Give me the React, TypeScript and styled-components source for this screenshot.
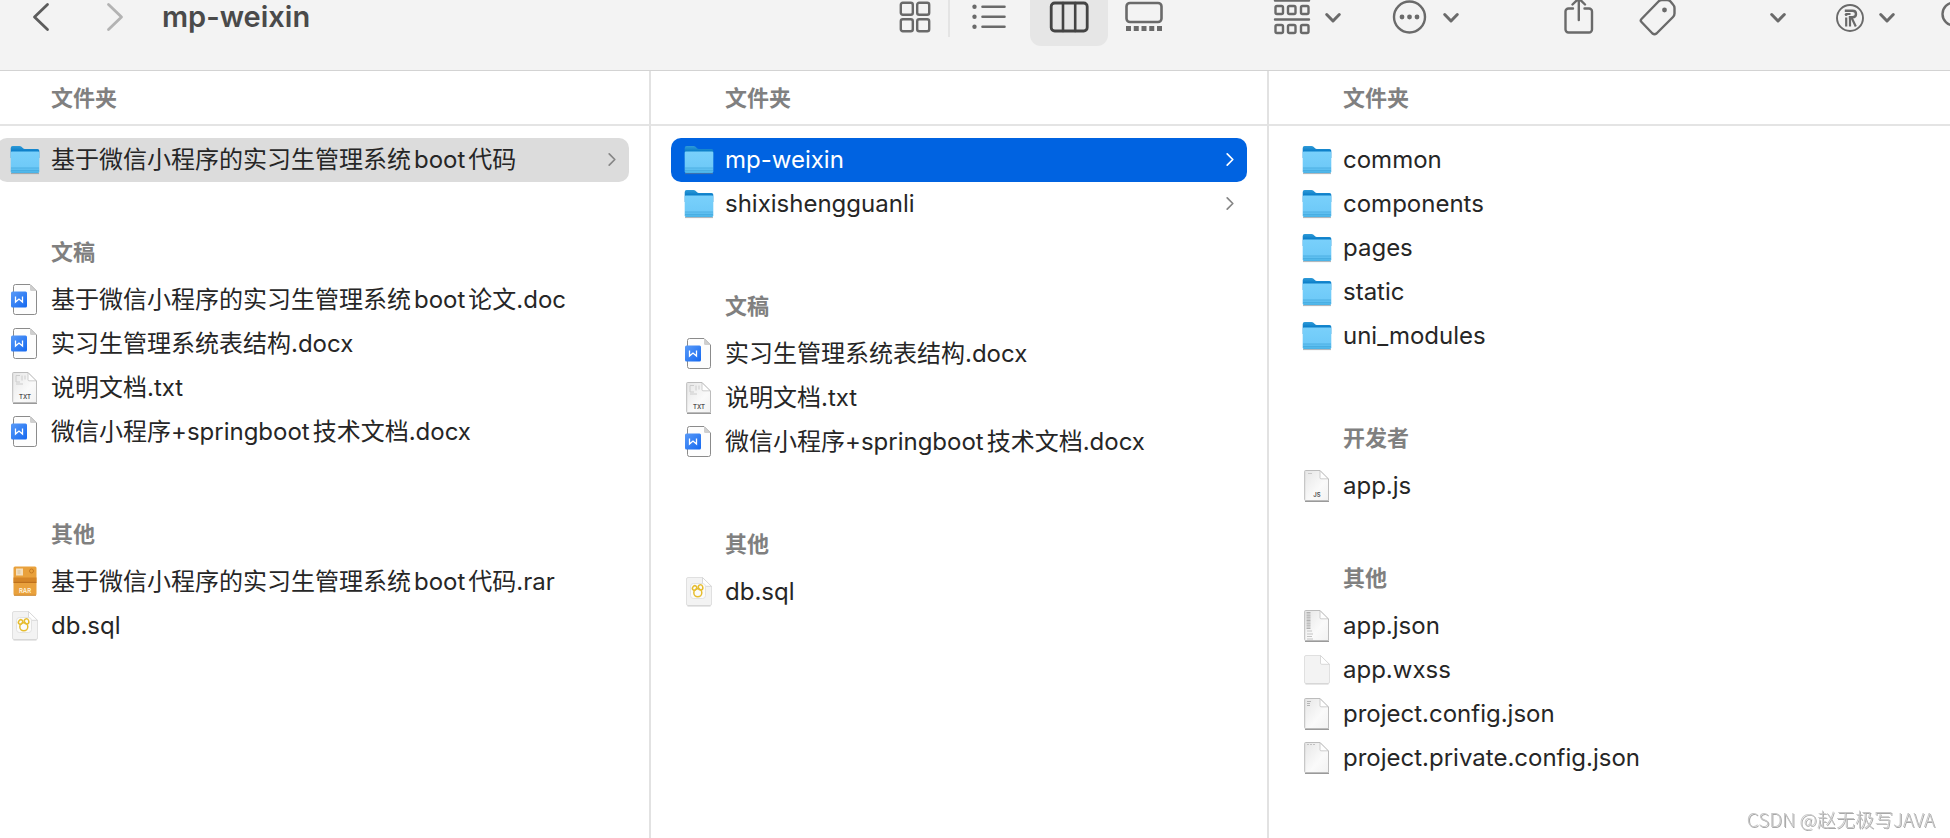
import React from "react";
import styled, { createGlobalStyle } from "styled-components";

const GlobalStyle = createGlobalStyle`
  *, *::before, *::after { box-sizing: border-box; }
  body {
    margin: 0;
    background: #ffffff;
    color: #262626;
    font-family: Inter, "Noto Sans CJK SC", sans-serif;
    font-size: 24px;
    overflow: hidden;
  }
  button {
    margin: 0;
    padding: 0;
    border: 0;
    background: none;
    color: inherit;
    font: inherit;
    text-align: left;
  }
  svg { display: block; flex: none; overflow: visible; }
`;

const Window = styled.div`
  display: flex;
  flex-direction: column;
  min-height: 100vh;
  overflow: hidden;
`;

/* ---------- toolbar ---------- */

const Toolbar = styled.header`
  display: flex;
  align-items: flex-start;
  height: 71px;
  background: #f3f3f3;
  border-bottom: 1px solid #d3d3d3;
  color: #6a6a6a;
`;

const Strip = styled.div`
  display: flex;
  flex: none;
  align-items: center;
  height: 58px;
  margin-top: -12px;
`;

const Navigation = styled(Strip)`
  flex: 1;
  padding-left: 4px;
`;

const NavButton = styled.button<{ $dim?: boolean }>`
  display: flex;
  justify-content: center;
  width: 74px;
  color: ${(p) => (p.$dim ? "#b3b3b3" : "#5c5c5c")};
`;

const Title = styled.h1`
  margin: 0 0 0 10px;
  color: #4a4a4a;
  font-size: 29px;
  font-weight: 600;
  line-height: 34px;
`;

const Segment = styled.button<{ $width: number; $active?: boolean }>`
  display: flex;
  align-items: center;
  justify-content: center;
  width: ${(p) => p.$width}px;
  height: 58px;
  border-radius: 11px;
  background: ${(p) => (p.$active ? "#e6e6e6" : "transparent")};
  color: ${(p) => (p.$active ? "#444444" : "inherit")};
`;

const SegmentDivider = styled.span`
  width: 2px;
  height: 40px;
  background: #e4e4e4;
`;

const Tool = styled.button<{ $gap: number }>`
  display: flex;
  align-items: center;
  gap: 15px;
  margin-left: ${(p) => p.$gap}px;
`;

const SearchTool = styled(Tool)`
  margin-right: -23px;
`;

/* ---------- column browser ---------- */

const Browser = styled.main`
  display: grid;
  grid-template-columns: 674fr 618fr 681fr;
  flex: 1;
  margin-left: -23px;
`;

const Column = styled.section`
  min-width: 0;
  border-right: 2px solid #e2e2e2;
  &:last-child { border-right: 0; }
`;

const ColumnHeading = styled.h2`
  margin: 0 0 12px;
  padding: 14px 20px 13px 74px;
  border-bottom: 2px solid #e4e4e4;
  color: #808080;
  font-size: 22px;
  font-weight: 600;
  line-height: 26px;
`;

const GroupHeading = styled.h3<{ $near: boolean }>`
  margin: ${(p) => (p.$near ? 57 : 67)}px 20px 13px 74px;
  color: #808080;
  font-size: 22px;
  font-weight: 600;
  line-height: 26px;
`;

const List = styled.ul`
  margin: 0;
  padding: 0 20px;
  list-style: none;
`;

type Tone = "active" | "path" | undefined;

const rowFill = { active: "#0063e1", path: "#dcdcdc" };

const Row = styled.button<{ $tone: Tone }>`
  display: flex;
  align-items: center;
  gap: 11px;
  width: 100%;
  height: 44px;
  padding: 0 13px;
  border-radius: 10px;
  background: ${(p) => (p.$tone ? rowFill[p.$tone] : "transparent")};
  color: ${(p) => (p.$tone === "active" ? "#ffffff" : "inherit")};
`;

const Name = styled.span`
  flex: 1;
  line-height: 30px;
  white-space: nowrap;
  text-autospace: normal;
`;

const Disclosure = styled.svg<{ $tone: Tone }>`
  color: ${(p) => (p.$tone === "active" ? "#ffffff" : "#868686")};
`;

const Watermark = styled.div`
  position: fixed;
  right: 15px;
  bottom: 6px;
  color: #c8c8c8;
  font-family: "Noto Sans CJK SC", sans-serif;
  font-size: 19px;
  font-weight: 300;
  line-height: 26px;
  text-shadow: 1px 1px 0 #a8a8a8;
`;

/* ---------- file icons, drawn on a 30 x 32 box ---------- */

const FolderIcon = () => (
  <svg width="30" height="32" viewBox="0 0 30 32" aria-hidden="true">
    <path d="M1 29.6h28" stroke="#6f7d86" strokeOpacity=".6" strokeWidth="1" />
    <path d="M.7 4Q.7 2 2.7 2H9.500q1.200 0 2 .8l1.300 1.200q.9.900 2 .9H27.500q1.800 0 1.800 1.800V14H.7z" fill="url(#folderBack)" />
    <path d="M.7 8.800Q.7 7.600 2 7.600H28q1.300 0 1.300 1.200V27.400q0 1.600-1.600 1.600H2.300Q.7 29 .7 27.400z" fill="url(#folderFront)" />
    <path d="M1 24h28M1 26.500h28" stroke="#3fa5db" strokeOpacity=".6" strokeWidth="1" />
  </svg>
);

const WordIcon = () => (
  <svg width="30" height="32" viewBox="0 0 30 32" aria-hidden="true">
    <path d="M5.500.5H20L26.500 7V28.500a2 2 0 0 1-2 2H5.500a2 2 0 0 1-2-2V2.500a2 2 0 0 1 2-2z" fill="#fdfdfd" stroke="#8b8b8b" />
    <path d="M20 1V5.500Q20 7 21.500 7H26z" fill="#cfcfcf" />
    <rect x="1" y="7.500" width="16" height="16" rx="1.500" fill="url(#wordBlue)" />
    <path d="M5.500 12.500V18L9 15L12.500 18V12.500" fill="none" stroke="#ffffff" strokeWidth="1.300" />
  </svg>
);

const Page = ({ children }: { children?: React.ReactNode }) => (
  <svg width="30" height="32" viewBox="0 0 30 32" aria-hidden="true">
    <path d="M3 31.200h24" stroke="#8f8f8f" strokeWidth="1.400" />
    <path d="M3.500.5H18L26.500 9V30.500H3.500a.8.800 0 0 1-.8-.8V1.300a.8.800 0 0 1 .8-.8z" fill="url(#paper)" stroke="#bcbcbc" />
    <path d="M18 .8V7.800a1 1 0 0 0 1 1H26.200z" fill="#ffffff" stroke="#c2c2c2" strokeWidth=".8" />
    {children}
  </svg>
);

const IconLabel = styled.text`
  font-family: Inter, sans-serif;
  font-size: 6px;
  font-weight: 600;
  text-anchor: middle;
`;

const TextIcon = () => (
  <Page>
    <path d="M6 3.500h4M6 3.500V10h4M12 3.500v5M15 3.500v4M6 12h7" fill="none" stroke="#cccccc" strokeWidth="1" />
    <IconLabel x="15" y="27" fill="#505050">TXT</IconLabel>
  </Page>
);

const ScriptIcon = () => (
  <Page>
    <path d="M6 3.500h4" stroke="#c8c8c8" />
    <IconLabel x="15" y="27" fill="#505050">JS</IconLabel>
  </Page>
);

const JsonIcon = () => (
  <Page>
    <path d="M6.500 2V19" stroke="#b0b0b0" strokeWidth="4" strokeDasharray="1 .6" />
    <path d="M5 21h5M5 24h6M5 26.500h5M5 29h6" stroke="#c4c4c4" />
  </Page>
);

const ConfigIcon = () => (
  <Page>
    <path d="M5 3.500h4M5 5.500h3M5 7.500h3" stroke="#b4b4b4" />
  </Page>
);

const PrivateConfigIcon = () => (
  <Page>
    <path d="M5 2.500h9" stroke="#c0c0c0" strokeDasharray="2 1" />
  </Page>
);

const PalePage = ({ children }: { children?: React.ReactNode }) => (
  <svg width="30" height="32" viewBox="0 0 30 32" aria-hidden="true">
    <path d="M4 1.500H18.500L27.500 10.500V28a1.500 1.500 0 0 1-1.500 1.500H4a1.500 1.500 0 0 1-1.500-1.500V3A1.500 1.500 0 0 1 4 1.500z" fill="#f3f3f3" stroke="#e0e0e0" />
    <path d="M3.500 30h23" stroke="#cfcfcf" />
    <path d="M18.500 1.500V9a1.300 1.300 0 0 0 1.300 1.300H27.500z" fill="#ffffff" stroke="#d0d0d0" strokeWidth=".8" />
    {children}
  </svg>
);

const SqlIcon = () => (
  <PalePage>
    <rect x="6.500" y="7.500" width="15" height="15" rx="3" fill="#fbfbfb" stroke="#dcdcdc" strokeWidth=".8" />
    <g fill="none" stroke="#e6bd30" strokeWidth="1.500">
      <circle cx="13.800" cy="16.800" r="4" />
      <ellipse cx="10.600" cy="12" rx="2" ry="2.400" transform="rotate(35 10.600 12)" />
      <ellipse cx="16.600" cy="11.400" rx="2.200" ry="2.600" transform="rotate(-15 16.600 11.400)" />
    </g>
  </PalePage>
);

const RarIcon = () => (
  <svg width="30" height="32" viewBox="0 0 30 32" aria-hidden="true">
    <rect x="3.500" y=".5" width="23" height="29" rx="1.500" fill="#e9a13c" />
    <path d="M3.500 11.500h23v4h-23z" fill="#d58526" />
    <path d="M3.500 15.500h23v1.500h-23z" fill="#bf701b" />
    <path d="M6 2.500h7v7H6z" fill="#f4dfbd" />
    <path d="M7.500 4h3v4h-3z" fill="#e2cfae" />
    <circle cx="21.500" cy="5" r="2" fill="none" stroke="#c67a20" />
    <path d="M4 29.300h22" stroke="#c27b25" strokeWidth=".8" />
    <IconLabel x="15" y="27" fill="#fff4df">RAR</IconLabel>
  </svg>
);

const Gradients = () => (
  <svg width="0" height="0" aria-hidden="true">
    <defs>
      <linearGradient id="folderBack" x1="0" y1="0" x2="0" y2="1">
        <stop offset="0" stopColor="#2f9bd8" />
        <stop offset=".4" stopColor="#0d7fc9" />
      </linearGradient>
      <linearGradient id="folderFront" x1="0" y1="0" x2="0" y2="1">
        <stop offset="0" stopColor="#79d0fb" />
        <stop offset=".7" stopColor="#6fcaf8" />
        <stop offset="1" stopColor="#49b2e6" />
      </linearGradient>
      <linearGradient id="wordBlue" x1="0" y1="0" x2="1" y2="1">
        <stop offset="0" stopColor="#5a9bf8" />
        <stop offset="1" stopColor="#1468f0" />
      </linearGradient>
      <linearGradient id="paper" x1="0" y1="0" x2="1" y2="1">
        <stop offset="0" stopColor="#e6e6e6" />
        <stop offset=".6" stopColor="#fafafa" />
        <stop offset="1" stopColor="#f2f2f2" />
      </linearGradient>
    </defs>
  </svg>
);

/* ---------- toolbar icons ---------- */

const line = {
  fill: "none",
  stroke: "currentColor",
  strokeWidth: 2.4,
  strokeLinecap: "round",
  strokeLinejoin: "round",
} as const;

const ArrowIcon = ({ forward }: { forward?: boolean }) => (
  <svg width="16" height="30" viewBox="0 0 16 30" aria-hidden="true">
    <path d={forward ? "M1.500 2.500L14.500 15L1.500 27.500" : "M14.500 2.500L1.500 15L14.500 27.500"} {...line} strokeWidth={2.8} />
  </svg>
);

const CaretIcon = () => (
  <svg width="16" height="12" viewBox="0 0 16 12" aria-hidden="true">
    <path d="M1.700 3.500L8 10L14.300 3.500" {...line} strokeWidth={3} />
  </svg>
);

const GridIcon = () => (
  <svg width="32" height="32" viewBox="0 0 32 32" aria-hidden="true">
    <g {...line}>
      <rect x="1.800" y="1.800" width="12" height="12" rx="2" />
      <rect x="18.200" y="1.800" width="12" height="12" rx="2" />
      <rect x="1.800" y="18.200" width="12" height="12" rx="2" />
      <rect x="18.200" y="18.200" width="12" height="12" rx="2" />
    </g>
  </svg>
);

const ListIcon = () => (
  <svg width="36" height="30" viewBox="0 0 36 30" aria-hidden="true">
    <path d="M10.500 4.800H32.500M10.500 14.800H32.500M10.500 24.800H32.500" {...line} strokeWidth={2.6} />
    <g fill="currentColor">
      <circle cx="2.500" cy="4.800" r="2.200" />
      <circle cx="2.500" cy="14.800" r="2.200" />
      <circle cx="2.500" cy="24.800" r="2.200" />
    </g>
  </svg>
);

const ColumnsIcon = () => (
  <svg width="40" height="32" viewBox="0 0 40 32" aria-hidden="true">
    <rect x="2.200" y="2" width="36" height="28" rx="3.500" {...line} strokeWidth={2.8} />
    <path d="M14 2V30M26.200 2V30" {...line} strokeWidth={2.6} />
  </svg>
);

const GalleryIcon = () => (
  <svg width="38" height="32" viewBox="0 0 38 32" aria-hidden="true">
    <rect x="1.500" y="2" width="35" height="19" rx="3.500" {...line} strokeWidth={2.6} />
    <path d="M1 27.500H37" fill="none" stroke="currentColor" strokeWidth="5" strokeDasharray="5 2.750" />
  </svg>
);

const GroupIcon = () => (
  <svg width="36" height="36" viewBox="0 0 36 36" aria-hidden="true">
    <path d="M1 1.500H35M1 20.500H35" {...line} />
    <g {...line}>
      {[7, 26].map((y) =>
        [1.5, 14, 27].map((x) => <rect key={`${x}-${y}`} x={x} y={y} width="7.500" height="8" rx="1.500" />)
      )}
    </g>
  </svg>
);

const MoreIcon = () => (
  <svg width="36" height="34" viewBox="0 0 36 34" aria-hidden="true">
    <circle cx="17.500" cy="17" r="15.500" {...line} />
    <g fill="currentColor">
      <circle cx="10" cy="17" r="2.400" />
      <circle cx="17.500" cy="17" r="2.400" />
      <circle cx="25" cy="17" r="2.400" />
    </g>
  </svg>
);

const ShareIcon = () => (
  <svg width="30" height="38" viewBox="0 0 30 38" aria-hidden="true">
    <path d="M9 10.500H4.500a3 3 0 0 0-3 3V31.500a3 3 0 0 0 3 3H25a3 3 0 0 0 3-3V13.500a3 3 0 0 0-3-3H20.500" {...line} />
    <path d="M14.800 22V1.500M8.500 6.500L14.800.5L21 6.500" {...line} />
  </svg>
);

const TagIcon = () => (
  <svg width="38" height="38" viewBox="0 0 38 38" aria-hidden="true">
    <path d="M19.500 3.500Q21 2 23 2H28Q30 2 31.500 3.500L34 6.500Q35.500 8 35.500 10V15.500Q35.500 17.500 34 19L17.500 35.500Q15.500 37 13.500 35.500L2.500 24Q1 22.500 2.500 21z" {...line} />
    <circle cx="25.500" cy="12" r="2.400" fill="currentColor" />
  </svg>
);

const RegisteredIcon = () => (
  <svg width="28" height="30" viewBox="0 0 28 30" aria-hidden="true">
    <circle cx="14" cy="16" r="13" {...line} strokeWidth={1.9} />
    <path d="M8.800 8.800H16.500Q20 8.800 20 12T16.500 15.300H12.800" fill="none" stroke="currentColor" strokeWidth="2.400" />
    <path d="M14.500 12H10V12M15.500 15.500L19.800 24.500M10.200 15.500V24.500M14 15.500V24.500" fill="none" stroke="currentColor" strokeWidth="2.200" />
    <circle cx="10.200" cy="12.600" r="1.500" fill="currentColor" />
  </svg>
);

const SearchIcon = () => (
  <svg width="32" height="34" viewBox="0 0 32 34" aria-hidden="true">
    <circle cx="13" cy="14" r="11.500" {...line} />
    <path d="M21.500 22.500L30 31" {...line} />
  </svg>
);

/* ---------- data ---------- */

const icons = {
  folder: FolderIcon,
  word: WordIcon,
  text: TextIcon,
  script: ScriptIcon,
  json: JsonIcon,
  config: ConfigIcon,
  privateConfig: PrivateConfigIcon,
  blank: PalePage,
  sql: SqlIcon,
  rar: RarIcon,
};

type Item = { name: string; icon: keyof typeof icons; tone?: Tone; opens?: boolean };
type Group = { title: string; items: Item[] };

const columns: Group[][] = [
  [
    { title: "文件夹", items: [{ name: "基于微信小程序的实习生管理系统boot代码", icon: "folder", tone: "path", opens: true }] },
    {
      title: "文稿",
      items: [
        { name: "基于微信小程序的实习生管理系统boot论文.doc", icon: "word" },
        { name: "实习生管理系统表结构.docx", icon: "word" },
        { name: "说明文档.txt", icon: "text" },
        { name: "微信小程序+springboot技术文档.docx", icon: "word" },
      ],
    },
    {
      title: "其他",
      items: [
        { name: "基于微信小程序的实习生管理系统boot代码.rar", icon: "rar" },
        { name: "db.sql", icon: "sql" },
      ],
    },
  ],
  [
    {
      title: "文件夹",
      items: [
        { name: "mp-weixin", icon: "folder", tone: "active", opens: true },
        { name: "shixishengguanli", icon: "folder", opens: true },
      ],
    },
    {
      title: "文稿",
      items: [
        { name: "实习生管理系统表结构.docx", icon: "word" },
        { name: "说明文档.txt", icon: "text" },
        { name: "微信小程序+springboot技术文档.docx", icon: "word" },
      ],
    },
    { title: "其他", items: [{ name: "db.sql", icon: "sql" }] },
  ],
  [
    {
      title: "文件夹",
      items: ["common", "components", "pages", "static", "uni_modules"].map((name) => ({ name, icon: "folder" as const })),
    },
    { title: "开发者", items: [{ name: "app.js", icon: "script" }] },
    {
      title: "其他",
      items: [
        { name: "app.json", icon: "json" },
        { name: "app.wxss", icon: "blank" },
        { name: "project.config.json", icon: "config" },
        { name: "project.private.config.json", icon: "privateConfig" },
      ],
    },
  ],
];

const FileRow = ({ item }: { item: Item }) => {
  const Icon = icons[item.icon];
  return (
    <li>
      <Row type="button" $tone={item.tone}>
        <Icon />
        <Name>{item.name}</Name>
        {item.opens && (
          <Disclosure $tone={item.tone} width="8" height="14" viewBox="0 0 8 14" aria-hidden="true">
            <path d="M1.200 .8L6.800 6.500L1.200 12.200" {...line} strokeWidth={1.7} />
          </Disclosure>
        )}
      </Row>
    </li>
  );
};

export default function App() {
  return (
    <>
      <GlobalStyle />
      <Window>
        <Toolbar>
          <Navigation>
            <NavButton type="button" aria-label="后退"><ArrowIcon /></NavButton>
            <NavButton type="button" aria-label="前进" $dim><ArrowIcon forward /></NavButton>
            <Title>mp-weixin</Title>
          </Navigation>
          <Strip>
            <Segment type="button" aria-label="图标" $width={66}><GridIcon /></Segment>
            <SegmentDivider />
            <Segment type="button" aria-label="列表" $width={80}><ListIcon /></Segment>
            <Segment type="button" aria-label="分栏" aria-pressed="true" $width={78} $active><ColumnsIcon /></Segment>
            <Segment type="button" aria-label="画廊" $width={72}><GalleryIcon /></Segment>
            <Tool type="button" aria-label="分组" $gap={94}><GroupIcon /><CaretIcon /></Tool>
            <Tool type="button" aria-label="操作" $gap={51}><MoreIcon /><CaretIcon /></Tool>
            <Tool type="button" aria-label="共享" $gap={105}><ShareIcon /></Tool>
            <Tool type="button" aria-label="标签" $gap={45}><TagIcon /></Tool>
            <Tool type="button" aria-label="更多" $gap={93}><CaretIcon /></Tool>
            <Tool type="button" aria-label="扩展" $gap={50}><RegisteredIcon /><CaretIcon /></Tool>
            <SearchTool type="button" aria-label="搜索" $gap={46}><SearchIcon /></SearchTool>
          </Strip>
        </Toolbar>
        <Browser>
          {columns.map((groups, c) => (
            <Column key={c}>
              {groups.map((group, g) => (
                <React.Fragment key={group.title}>
                  {g === 0 ? (
                    <ColumnHeading>{group.title}</ColumnHeading>
                  ) : (
                    <GroupHeading $near={groups[g - 1].items.length === 1}>{group.title}</GroupHeading>
                  )}
                  <List>
                    {group.items.map((item) => <FileRow key={item.name} item={item} />)}
                  </List>
                </React.Fragment>
              ))}
            </Column>
          ))}
        </Browser>
      </Window>
      <Watermark>CSDN @赵无极写JAVA</Watermark>
      <Gradients />
    </>
  );
}
